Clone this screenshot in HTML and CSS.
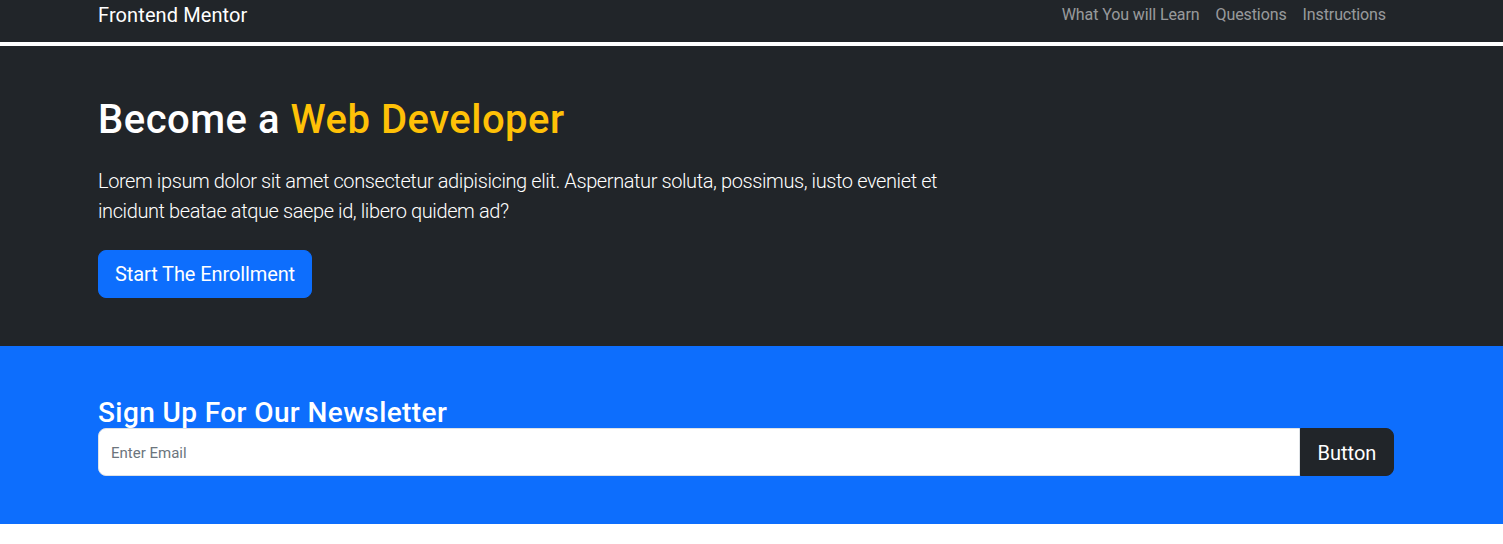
FILE: index.html
```html
<!DOCTYPE html>
<html lang="en">
<head>
<meta charset="utf-8">
<title>Frontend Mentor</title>
<link rel="stylesheet" href="styles.css">
</head>
<body>
<nav class="navbar">
  <div class="container nav-inner">
    <a class="brand" href="#">Frontend Mentor</a>
    <ul class="nav-links">
      <li><a href="#">What You will Learn</a></li>
      <li><a href="#">Questions</a></li>
      <li><a href="#">Instructions</a></li>
    </ul>
  </div>
</nav>
<section class="hero">
  <div class="container">
    <h1 class="hero-title">Become a <span class="accent">Web Developer</span></h1>
    <p class="lead">Lorem ipsum dolor sit amet consectetur adipisicing elit. Aspernatur soluta, possimus, iusto eveniet et incidunt beatae atque saepe id, libero quidem ad?</p>
    <a class="btn-primary" href="#">Start The Enrollment</a>
  </div>
</section>
<section class="newsletter">
  <div class="container">
    <h3 class="news-title">Sign Up For Our Newsletter</h3>
    <div class="input-group">
      <input class="email" type="email" placeholder="Enter Email">
      <button class="btn-dark" type="button">Button</button>
    </div>
  </div>
</section>
</body>
</html>
```
FILE: styles.css
```css
* { box-sizing: border-box; }
html, body { margin: 0; padding: 0; }
body {
  font-family: Roboto, "Open Sans", sans-serif;
  background: #fff;
  color: #212529;
  font-size: 16px;
  line-height: 1.5;
}
.container {
  width: 1296px;
  margin-left: 98px;
}
.navbar {
  background: #212529;
  height: 42px;
  border-bottom: 4px solid #fff;
  box-sizing: content-box;
}
.nav-inner {
  display: flex;
  justify-content: space-between;
  align-items: flex-start;
}
.brand {
  color: #fff;
  text-decoration: none;
  font-size: 20px;
  line-height: 30px;
  letter-spacing: 0.1px;
}
.nav-links {
  list-style: none;
  display: flex;
  margin: 0;
  padding: 0;
}
.nav-links a {
  display: block;
  padding: 3px 8px 0;
  color: rgba(255,255,255,.55);
  text-decoration: none;
  font-size: 16px;
  line-height: 24px;
  letter-spacing: -0.1px;
}
.hero {
  background: #212529;
  color: #fff;
  padding: 48px 0;
}
.hero-title {
  margin: 0 0 24px;
  padding-top: 4px;
  font-size: 40px;
  font-weight: 500;
  line-height: 44px;
  letter-spacing: 0.5px;
}
.accent { color: #ffc107; }
.lead {
  font-size: 20px;
  font-weight: 300;
  line-height: 30px;
  letter-spacing: -0.4px;
  margin: 0 0 24px;
  max-width: 860px;
}
.btn-primary {
  display: inline-block;
  background: #0d6efd;
  color: #fff;
  text-decoration: none;
  font-size: 20px;
  line-height: 30px;
  padding: 8px 16px;
  border: 1px solid #0d6efd;
  border-radius: 8px;
  letter-spacing: -0.1px;
}
.newsletter {
  background: #0d6efd;
  padding: 48px 0;
}
.news-title {
  margin: 0;
  padding-top: 4px;
  color: #fff;
  font-size: 28px;
  font-weight: 500;
  line-height: 30px;
  letter-spacing: 0.4px;
}
.input-group {
  display: flex;
  height: 48px;
}
.email {
  flex: 1;
  min-width: 0;
  border: 1px solid #dee2e6;
  border-radius: 8px 0 0 8px;
  padding: 1px 12px 0;
  font-family: inherit;
  font-size: 15px;
  color: #212529;
  background: #fff;
  outline: none;
}
.email::placeholder { color: #6c757d; opacity: 1; }
.btn-dark {
  background: #212529;
  color: #fff;
  border: 1px solid #212529;
  border-radius: 0 8px 8px 0;
  font-family: inherit;
  font-size: 20px;
  padding: 2px 16px 0;
  width: 94px;
  cursor: pointer;
}
```
